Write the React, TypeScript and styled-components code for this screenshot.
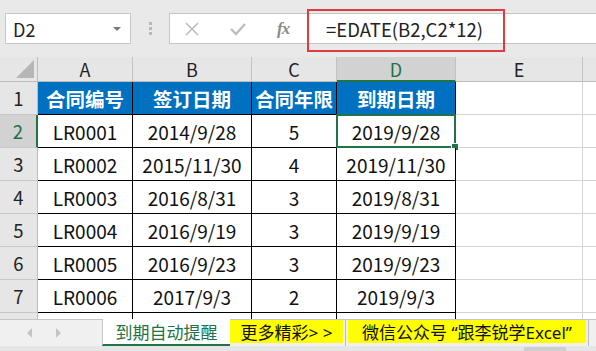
import styled, { createGlobalStyle } from "styled-components";

const GlobalStyle = createGlobalStyle`
    html, body {
        margin: 0;
        padding: 0;
        background: #ffffff;
        overflow: hidden;
    }
    body {
        font-family: "Noto Sans CJK SC", "Noto Sans", sans-serif;
    }
`;

const FONT = `"Noto Sans CJK SC", "Noto Sans", sans-serif`;

const COLS = [
    { key: "A", width: 95 },
    { key: "B", width: 119 },
    { key: "C", width: 85 },
    { key: "D", width: 119 },
    { key: "E", width: 127 },
    { key: "F", width: 20 },
];

const HEADERS = ["合同编号", "签订日期", "合同年限", "到期日期"];

const ROWS = [
    ["LR0001", "2014/9/28", "5", "2019/9/28"],
    ["LR0002", "2015/11/30", "4", "2019/11/30"],
    ["LR0003", "2016/8/31", "3", "2019/8/31"],
    ["LR0004", "2016/9/19", "3", "2019/9/19"],
    ["LR0005", "2016/9/23", "3", "2019/9/23"],
    ["LR0006", "2017/9/3", "2", "2019/9/3"],
];

const gridTemplate = `38px ${COLS.map(c => c.width + "px").join(" ")}`;

const App = () => {
    return (
        <>
            <GlobalStyle />
            <Page>
                <Toolbar>
                    <NameBox>
                        <span>D2</span>
                        <DropArrow />
                    </NameBox>
                    <Grip>
                        <i /><i /><i />
                    </Grip>
                    <FormulaBox>
                        <ToolIcon>
                            <svg width="16" height="16" viewBox="0 0 16 16">
                                <path d="M2 2 L14 14 M14 2 L2 14" stroke="#bdbdbd" strokeWidth="1.6" fill="none" />
                            </svg>
                        </ToolIcon>
                        <ToolIcon>
                            <svg width="18" height="16" viewBox="0 0 18 16">
                                <path d="M2 8 L7 13 L16 3" stroke="#bdbdbd" strokeWidth="2.4" fill="none" />
                            </svg>
                        </ToolIcon>
                        <Fx>fx</Fx>
                        <Formula>=EDATE(B2,C2*12)</Formula>
                        <Highlight />
                    </FormulaBox>
                </Toolbar>

                <Sheet>
                    <Corner />
                    {COLS.map(c => (
                        <ColHead key={c.key} $active={c.key === "D"}>{c.key !== "F" ? c.key : ""}</ColHead>
                    ))}

                    <RowHead>1</RowHead>
                    {HEADERS.map(h => (
                        <TitleCell key={h}>{h}</TitleCell>
                    ))}
                    <Cell />
                    <Cell />

                    {ROWS.map((r, i) => (
                        <Row key={i} index={i + 2} data={r} />
                    ))}

                    <RowHead $short />
                    <DataCell $short />
                    <DataCell $short />
                    <DataCell $short />
                    <DataCell $short />
                    <Cell $short />
                    <Cell $short />
                </Sheet>

                <TabBar>
                    <TabNav>
                        <svg width="8" height="12" viewBox="0 0 8 12"><path d="M6 1 L1 6 L6 11 Z" fill="#c4c4c4" /></svg>
                        <svg width="8" height="12" viewBox="0 0 8 12"><path d="M2 1 L7 6 L2 11 Z" fill="#c4c4c4" /></svg>
                    </TabNav>
                    <ActiveTab>到期自动提醒</ActiveTab>
                    <YellowTab $w={113}>更多精彩&gt; &gt;</YellowTab>
                    <TabGap />
                    <YellowTab $w={238}>微信公众号 “跟李锐学Excel”</YellowTab>
                    <TabGap />
                </TabBar>
                <BottomStrip>
                    <ScrollThumb />
                </BottomStrip>
            </Page>
        </>
    );
};

const Row = ({ index, data }: { index: number; data: string[] }) => (
    <>
        <RowHead $active={index === 2}>{index}</RowHead>
        {data.map((v, j) => (
            <DataCell key={j} $selected={index === 2 && j === 3}>{v}</DataCell>
        ))}
        <Cell />
        <Cell />
    </>
);

const Page = styled.div`
    width: 596px;
    height: 351px;
    display: flex;
    flex-direction: column;
    background: #ffffff;
    overflow: hidden;
`;

const Toolbar = styled.div`
    height: 57px;
    box-sizing: border-box;
    background: #e9e9e9;
    display: flex;
    align-items: flex-start;
    padding: 13px 0 0 5px;
`;

const NameBox = styled.div`
    width: 126px;
    height: 31px;
    box-sizing: border-box;
    background: #ffffff;
    border: 1px solid #c6c6c6;
    display: flex;
    align-items: center;
    justify-content: space-between;
    padding: 0 9px 0 7px;
    font-family: ${FONT};
    font-size: 18px;
    color: #222222;
`;

const DropArrow = styled.span`
    width: 0;
    height: 0;
    border-left: 4px solid transparent;
    border-right: 4px solid transparent;
    border-top: 4px solid #777777;
`;

const Grip = styled.div`
    width: 38px;
    height: 31px;
    display: flex;
    flex-direction: column;
    align-items: center;
    justify-content: center;
    gap: 2px;

    & i {
        display: block;
        width: 3px;
        height: 3px;
        background: #b8b8b8;
    }
`;

const FormulaBox = styled.div`
    position: relative;
    flex: 1;
    height: 31px;
    box-sizing: border-box;
    background: #ffffff;
    border: 1px solid #c6c6c6;
    border-right: none;
    display: flex;
    align-items: center;
    padding-left: 14px;
`;

const ToolIcon = styled.span`
    width: 45px;
    display: flex;
    align-items: center;
    justify-content: flex-start;
`;

const Fx = styled.span`
    width: 42px;
    padding-left: 3px;
    font-family: "Liberation Serif", serif;
    font-style: italic;
    font-weight: bold;
    font-size: 17px;
    color: #8a8a8a;
    letter-spacing: -1px;
`;

const Formula = styled.span`
    font-family: ${FONT};
    font-size: 18.5px;
    color: #222222;
    margin-left: 7px;
`;

const Highlight = styled.div`
    position: absolute;
    left: 137px;
    top: -5px;
    width: 198px;
    height: 43px;
    border: 2px solid #e0393e;
    box-sizing: border-box;
`;

const Sheet = styled.div`
    display: grid;
    grid-template-columns: ${gridTemplate};
    grid-template-rows: 25px repeat(7, 33px) 6px;
    background: #ffffff;
`;

const Corner = styled.div`
    position: relative;
    background: #e6e6e6;
    border-right: 1px solid #bdbdbd;
    border-bottom: 1px solid #bdbdbd;

    &::after {
        content: "";
        position: absolute;
        right: 3px;
        bottom: 3px;
        width: 0;
        height: 0;
        border-left: 18px solid transparent;
        border-bottom: 18px solid #b6b6b6;
    }
`;

const ColHead = styled.div<{ $active?: boolean }>`
    background: ${p => (p.$active ? "#d2d2d2" : "#e6e6e6")};
    border-right: 1px solid #c2c2c2;
    border-bottom: ${p => (p.$active ? "2px solid #217346" : "1px solid #bdbdbd")};
    display: flex;
    align-items: center;
    justify-content: center;
    font-family: ${FONT};
    font-size: 18px;
    color: ${p => (p.$active ? "#217346" : "#222222")};
    box-sizing: border-box;
`;

const RowHead = styled.div<{ $active?: boolean; $short?: boolean }>`
    background: ${p => (p.$active ? "#d2d2d2" : "#e6e6e6")};
    border-right: ${p => (p.$active ? "2px solid #217346" : "1px solid #bdbdbd")};
    border-bottom: ${p => (p.$short ? "none" : "1px solid #c8c8c8")};
    display: flex;
    align-items: center;
    justify-content: center;
    font-family: ${FONT};
    font-size: 18.5px;
    color: ${p => (p.$active ? "#217346" : "#222222")};
    box-sizing: border-box;
`;

const TitleCell = styled.div`
    background: #0070c0;
    border-right: 1px solid #000000;
    border-bottom: 1px solid #000000;
    display: flex;
    align-items: center;
    justify-content: center;
    font-family: ${FONT};
    font-weight: bold;
    font-size: 19.5px;
    color: #ffffff;
    box-sizing: border-box;
`;

const DataCell = styled.div<{ $selected?: boolean; $short?: boolean }>`
    position: relative;
    background: #ffffff;
    border-right: 1px solid #000000;
    border-bottom: ${p => (p.$short ? "none" : "1px solid #000000")};
    display: flex;
    align-items: center;
    justify-content: center;
    font-family: ${FONT};
    font-size: 19px;
    color: #111111;
    box-sizing: border-box;

    ${p => p.$selected && `
        &::before {
            content: "";
            position: absolute;
            left: -1px;
            top: -1px;
            right: -1px;
            bottom: -1px;
            border: 2px solid #217346;
        }
        &::after {
            content: "";
            position: absolute;
            right: -4px;
            bottom: -4px;
            width: 6px;
            height: 6px;
            background: #217346;
            border: 1px solid #ffffff;
        }
    `}
`;

const Cell = styled.div<{ $short?: boolean }>`
    border-right: 1px solid #d4d4d4;
    border-bottom: ${p => (p.$short ? "none" : "1px solid #d4d4d4")};
    box-sizing: border-box;
`;

const TabBar = styled.div`
    height: 27px;
    box-sizing: border-box;
    background: #f0f0f0;
    border-top: 1px solid #c6c6c6;
    display: flex;
    align-items: stretch;
`;

const TabNav = styled.div`
    width: 102px;
    display: flex;
    align-items: center;
    gap: 20px;
    padding-left: 26px;
    box-sizing: border-box;
`;

const ActiveTab = styled.div`
    width: 128px;
    margin-top: -1px;
    background: #ffffff;
    border-left: 1px solid #c6c6c6;
    border-bottom: 2px solid #217346;
    box-sizing: border-box;
    display: flex;
    align-items: center;
    justify-content: center;
    font-family: ${FONT};
    font-size: 17px;
    color: #217346;
`;

const YellowTab = styled.div<{ $w: number }>`
    width: ${p => p.$w}px;
    background: #ffff00;
    display: flex;
    align-items: center;
    justify-content: center;
    white-space: pre;
    font-family: "Noto Sans", "Noto Sans CJK SC", sans-serif;
    font-size: 17px;
    color: #111111;
    margin-bottom: 3px;
`;

const TabGap = styled.div`
    width: 5px;
    display: flex;
    justify-content: center;

    &::after {
        content: "";
        width: 1px;
        height: 100%;
        background: #bdbdbd;
    }
`;

const BottomStrip = styled.div`
    flex: 1;
    background: #e6e6e6;
    position: relative;
`;

const ScrollThumb = styled.div`
    position: absolute;
    left: 524px;
    top: 1px;
    width: 42px;
    height: 6px;
    background: #cfcfcf;
`;

export default App;
